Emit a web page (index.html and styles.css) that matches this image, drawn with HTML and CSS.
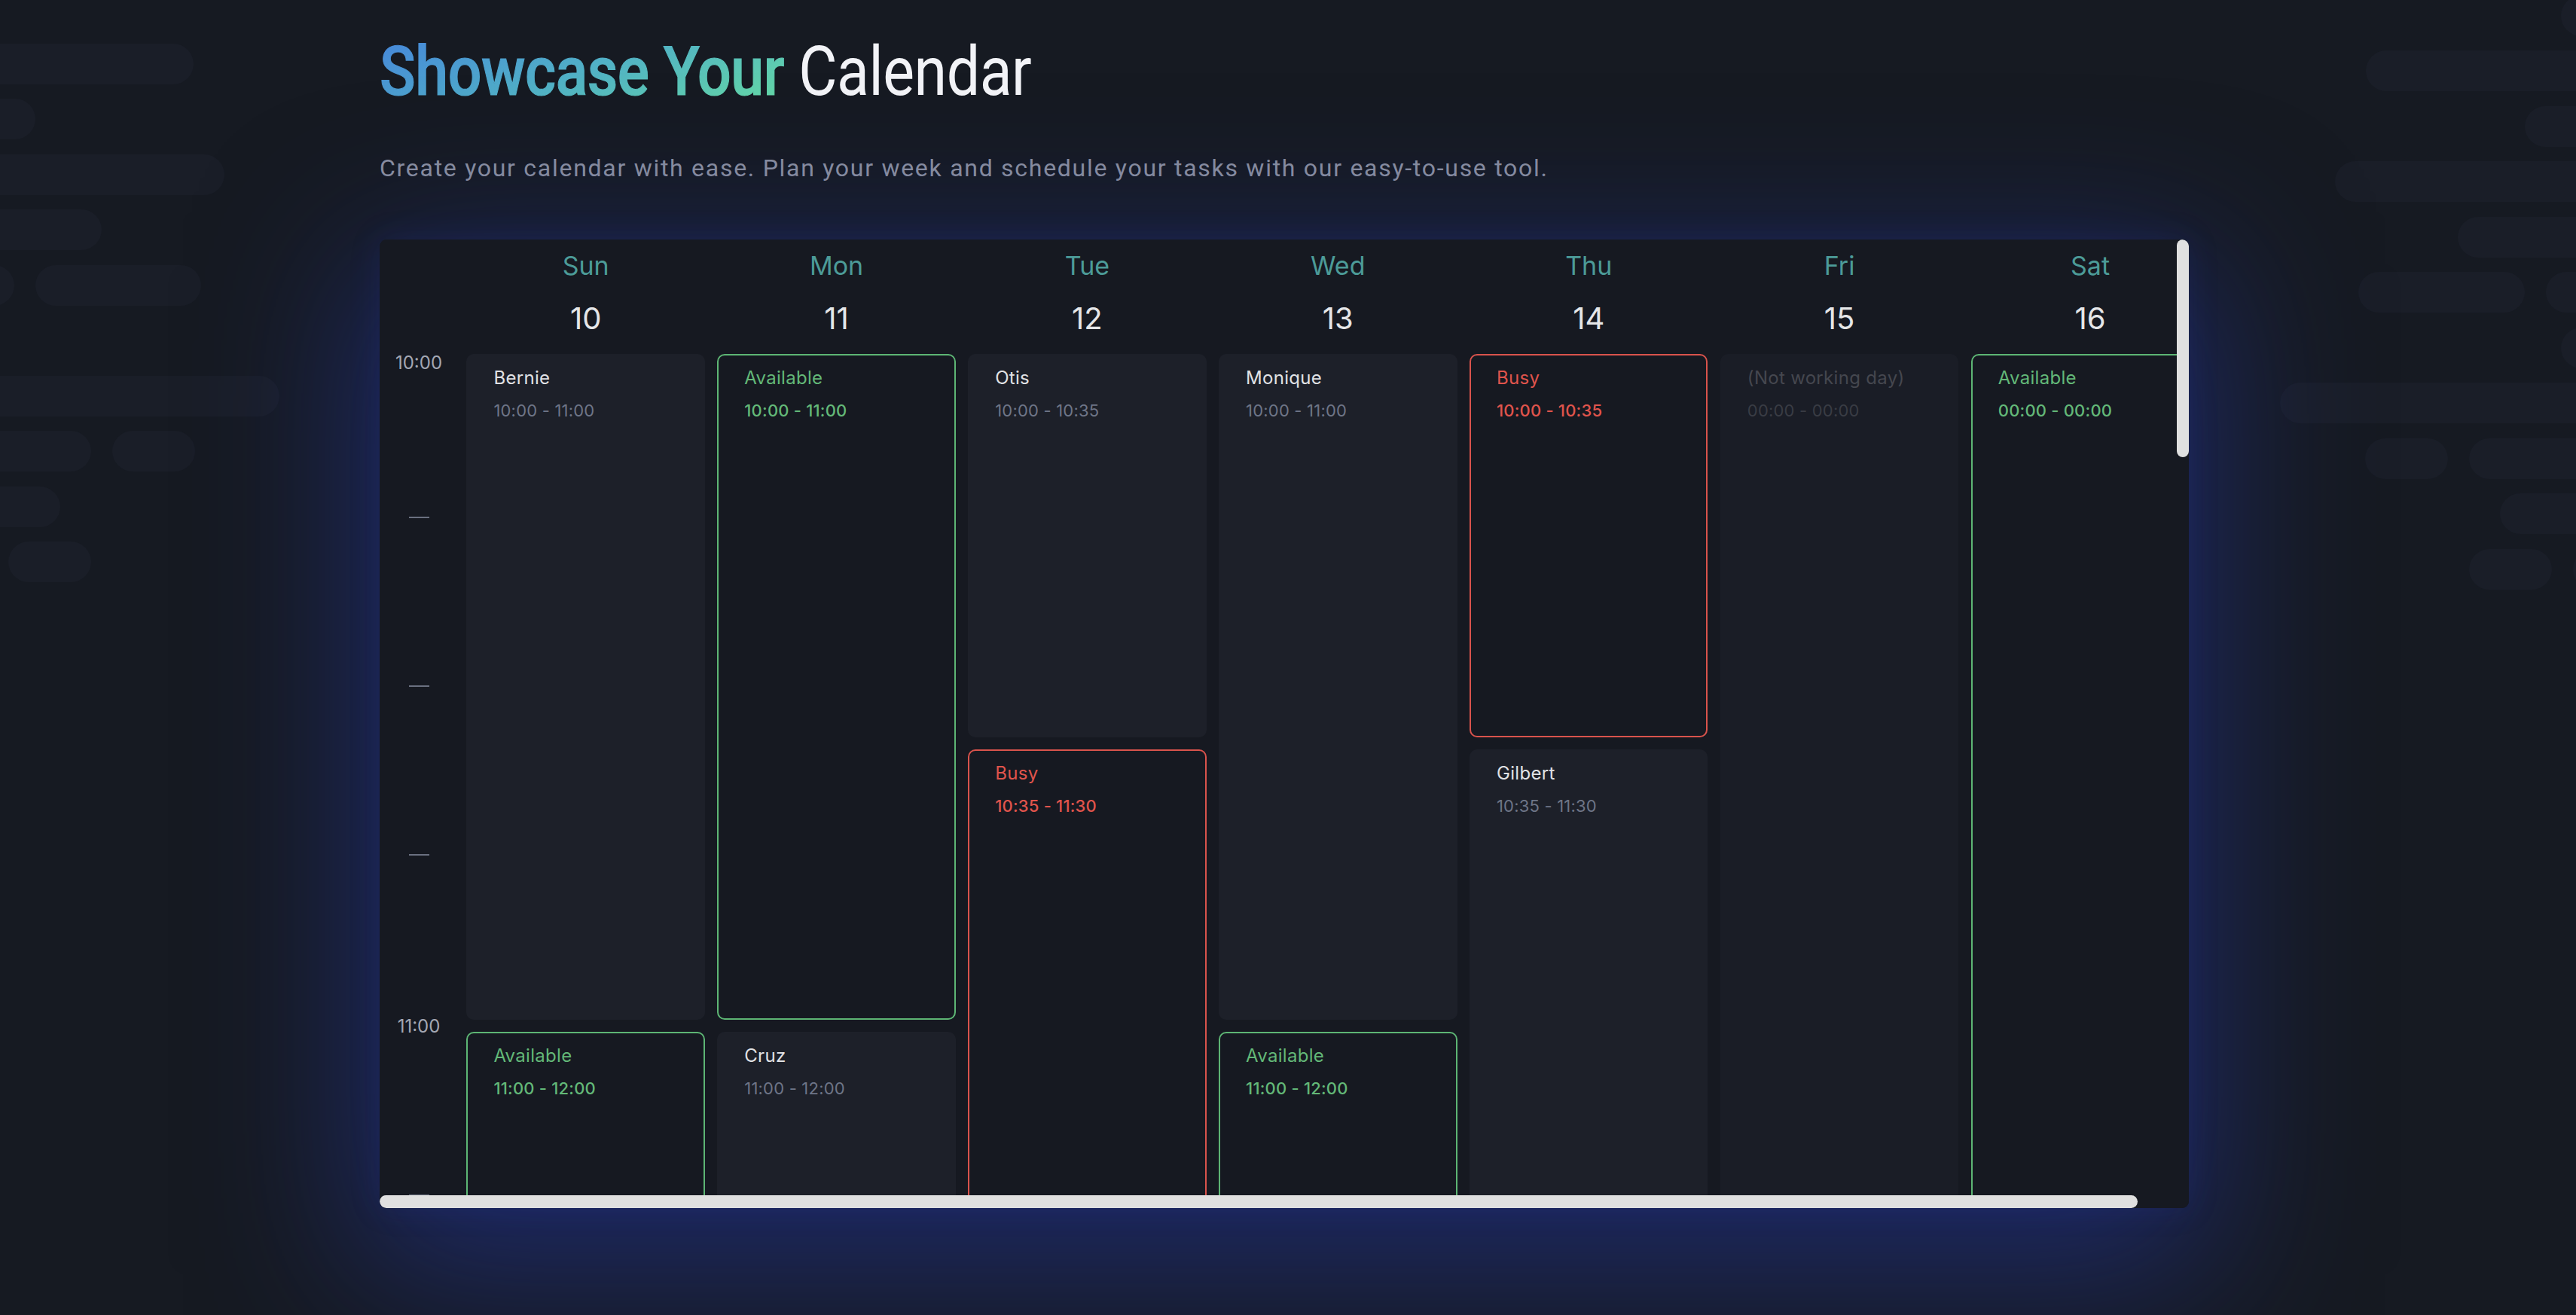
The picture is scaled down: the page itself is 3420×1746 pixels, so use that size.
FILE: index.html
```html
<!DOCTYPE html>
<html lang="en">
<head>
<meta charset="utf-8">
<title>Showcase Your Calendar</title>
<link rel="stylesheet" href="styles.css">
</head>
<body>
<div class="deco deco-left">
  <div class="row"><span class="pill edge-l w257"></span></div>
  <div class="row"><span class="pill edge-l w47"></span></div>
  <div class="row"><span class="pill edge-l w298"></span></div>
  <div class="row"><span class="pill edge-l w135"></span></div>
  <div class="row"><span class="pill edge-l w19"></span><span class="pill w220"></span></div>
  <div class="row"></div>
  <div class="row"><span class="pill edge-l w371"></span></div>
  <div class="row"><span class="pill edge-l w121"></span><span class="pill w110"></span></div>
  <div class="row"><span class="pill edge-l w80"></span></div>
  <div class="row"><span class="pill off11 w110"></span></div>
</div>
<div class="deco deco-right">
  <div class="row"><span class="pill edge-r w20"></span></div>
  <div class="row"><span class="pill edge-r w279"></span></div>
  <div class="row"><span class="pill edge-r w68"></span></div>
  <div class="row"><span class="pill edge-r w320"></span></div>
  <div class="row"><span class="pill edge-r w157"></span></div>
  <div class="row"><span class="pill w221"></span><span class="pill edge-r w40"></span></div>
  <div class="row"><span class="pill edge-r w20"></span></div>
  <div class="row"><span class="pill edge-r w393"></span></div>
  <div class="row"><span class="pill w110"></span><span class="pill edge-r w142"></span></div>
  <div class="row"><span class="pill edge-r w101"></span></div>
  <div class="row"><span class="pill w110"></span><span class="pill edge-r w4"></span></div>
</div>

<main class="page">
  <h1 class="title"><span class="grad">Showcase Your</span> Calendar</h1>
  <p class="subtitle">Create your calendar with ease. Plan your week and schedule your tasks with our easy-to-use tool.</p>

  <section class="cal">
    <div class="cal-inner">
      <div class="cal-head">
        <div class="corner"></div>
        <div class="day"><div class="dname">Sun</div><div class="dnum">10</div></div>
        <div class="day"><div class="dname">Mon</div><div class="dnum">11</div></div>
        <div class="day"><div class="dname">Tue</div><div class="dnum">12</div></div>
        <div class="day"><div class="dname">Wed</div><div class="dnum">13</div></div>
        <div class="day"><div class="dname">Thu</div><div class="dnum">14</div></div>
        <div class="day"><div class="dname">Fri</div><div class="dnum">15</div></div>
        <div class="day"><div class="dname">Sat</div><div class="dnum">16</div></div>
      </div>
      <div class="cal-body">
        <div class="times">
          <div class="tl t-first">10:00</div>
          <div class="tl t-q"><span class="dash"></span></div>
          <div class="tl t-q"><span class="dash"></span></div>
          <div class="tl t-last"><span class="dash"></span></div>
          <div class="tl t-q">11:00</div>
          <div class="tl t-q"><span class="dash"></span></div>
        </div>
        <div class="col">
          <div class="ev ev-person" style="height:884px"><div class="ev-title">Bernie</div><div class="ev-time">10:00 - 11:00</div></div>
          <div class="ev ev-avail" style="height:884px"><div class="ev-title">Available</div><div class="ev-time">11:00 - 12:00</div></div>
        </div>
        <div class="col">
          <div class="ev ev-avail" style="height:884px"><div class="ev-title">Available</div><div class="ev-time">10:00 - 11:00</div></div>
          <div class="ev ev-person" style="height:884px"><div class="ev-title">Cruz</div><div class="ev-time">11:00 - 12:00</div></div>
        </div>
        <div class="col">
          <div class="ev ev-person" style="height:509px"><div class="ev-title">Otis</div><div class="ev-time">10:00 - 10:35</div></div>
          <div class="ev ev-busy" style="height:809px"><div class="ev-title">Busy</div><div class="ev-time">10:35 - 11:30</div></div>
        </div>
        <div class="col">
          <div class="ev ev-person" style="height:884px"><div class="ev-title">Monique</div><div class="ev-time">10:00 - 11:00</div></div>
          <div class="ev ev-avail" style="height:884px"><div class="ev-title">Available</div><div class="ev-time">11:00 - 12:00</div></div>
        </div>
        <div class="col">
          <div class="ev ev-busy" style="height:509px"><div class="ev-title">Busy</div><div class="ev-time">10:00 - 10:35</div></div>
          <div class="ev ev-person" style="height:809px"><div class="ev-title">Gilbert</div><div class="ev-time">10:35 - 11:30</div></div>
        </div>
        <div class="col">
          <div class="ev ev-off" style="height:2000px"><div class="ev-title">(Not working day)</div><div class="ev-time">00:00 - 00:00</div></div>
        </div>
        <div class="col">
          <div class="ev ev-avail" style="height:2000px"><div class="ev-title">Available</div><div class="ev-time">00:00 - 00:00</div></div>
        </div>
      </div>
    </div>
    <div class="sb-v"></div>
    <div class="sb-h"></div>
  </section>
</main>
</body>
</html>
```

FILE: styles.css
```css
* { box-sizing: border-box; }

html, body {
  margin: 0;
  padding: 0;
  height: 1746px;
  overflow: hidden;
  background: #161a22;
}

body {
  position: relative;
  font-family: "Roboto", "Liberation Sans", sans-serif;
}

/* decorative skeleton pills */
.deco {
  position: absolute;
  display: flex;
  flex-direction: column;
  gap: 19.5px;
  z-index: 0;
}
.deco-left { top: 57.6px; left: 0; align-items: flex-start; }
.deco-right { top: -6.5px; right: 0; align-items: flex-end; }
.deco .row {
  height: 54px;
  display: flex;
  gap: 28px;
}
.deco-right .row { justify-content: flex-end; }
.pill {
  display: block;
  height: 54px;
  border-radius: 27px;
  background: #1a1e28;
}
.edge-l { margin-left: -60px; }
.edge-r { margin-right: -60px; }
.off11 { margin-left: 11px; }
.edge-l.w257 { width: 317px; }
.edge-l.w47 { width: 107px; }
.edge-l.w298 { width: 358px; }
.edge-l.w135 { width: 195px; }
.edge-l.w19 { width: 79px; }
.edge-l.w371 { width: 431px; }
.edge-l.w121 { width: 181px; }
.edge-l.w80 { width: 140px; }
.w220 { width: 220px; }
.w110 { width: 110px; }
.w221 { width: 221px; }
.edge-r.w20 { width: 80px; }
.edge-r.w279 { width: 339px; }
.edge-r.w68 { width: 128px; }
.edge-r.w320 { width: 380px; }
.edge-r.w157 { width: 217px; }
.edge-r.w40 { width: 100px; }
.edge-r.w393 { width: 453px; }
.edge-r.w142 { width: 202px; }
.edge-r.w101 { width: 161px; }
.edge-r.w4 { width: 64px; }

/* page */
.page {
  position: relative;
  z-index: 1;
  padding: 42px 0 0 504px;
}

.title {
  margin: 0;
  font-family: "Roboto", sans-serif;
  font-size: 91px;
  line-height: 107px;
  font-weight: 400;
  color: #f2f3f7;
  letter-spacing: -0.5px;
  white-space: nowrap;
  width: max-content;
  transform: scaleX(0.866);
  transform-origin: left center;
}
.grad {
  font-weight: 500;
  -webkit-text-stroke: 1.2px transparent;
  background: linear-gradient(160deg, #4584dc 0%, #51b1c6 50%, #66dca3 100%);
  -webkit-background-clip: text;
  background-clip: text;
  color: transparent;
}

.subtitle {
  margin: 56px 0 0;
  font-family: "Roboto", sans-serif;
  font-size: 32px;
  line-height: 37.5px;
  letter-spacing: 1.72px;
  color: #8b90a0;
  white-space: nowrap;
}

/* calendar card */
.cal {
  position: relative;
  margin-top: 75px;
  width: 2402px;
  height: 1286px;
  border-radius: 9px;
  background: #161921;
  overflow: hidden;
  box-shadow: 0 0 40px 0 rgba(38, 58, 170, 0.18), 0 60px 210px 30px rgba(38, 58, 170, 0.5);
  font-family: "Inter", "Roboto", sans-serif;
}

.cal-head,
.cal-body {
  display: grid;
  grid-template-columns: 99px repeat(7, 316.5px);
  column-gap: 16.4px;
}

.cal-head {
  padding-top: 14px;
}
.day {
  text-align: center;
}
.dname {
  font-size: 34px;
  line-height: 41px;
  color: #4c9b98;
}
.dnum {
  margin-top: 26px;
  font-size: 40px;
  line-height: 48px;
  color: #e5e6e8;
}

.cal-body {
  margin-top: 23px;
  align-items: start;
}

.times {
  margin-top: -3px;
  padding-left: 5px;
  text-align: center;
  font-size: 24px;
  line-height: 29px;
  color: #a3a7b3;
}
.tl { display: flow-root; }
.t-first { height: 205.5px; }
.t-q { height: 224px; }
.t-last { height: 228px; }
.dash {
  display: block;
  width: 27px;
  height: 2px;
  margin: 13.5px auto 0;
  background: #6a7080;
}

.col {
  display: flex;
  flex-direction: column;
  gap: 16px;
}

.ev {
  flex: none;
  border-radius: 10px;
  padding: 18.5px 20px 0 36px;
}
.ev-title {
  font-size: 24px;
  line-height: 28px;
  letter-spacing: 0.3px;
  white-space: nowrap;
}
.ev-time {
  margin-top: 15.5px;
  font-size: 22px;
  line-height: 27px;
  letter-spacing: 0.2px;
  white-space: nowrap;
}

.ev-person { background: #1d2029; }
.ev-person .ev-title { color: #e1e2e5; }
.ev-person .ev-time { color: #6e7587; }

.ev-avail {
  border: 2px solid #5db574;
  padding-left: 34px;
  padding-top: 16.5px;
  background: #161921;
}
.ev-avail .ev-title { color: #63b878; }
.ev-avail .ev-time { color: #63b878; font-weight: 500; }

.ev-busy {
  border: 2px solid #d9534c;
  padding-left: 34px;
  padding-top: 16.5px;
  background: #161921;
}
.ev-busy .ev-title { color: #e0544c; }
.ev-busy .ev-time { color: #e0544c; font-weight: 500; }

.ev-off { background: #1a1d26; }
.ev-off .ev-title { color: #45474f; }
.ev-off .ev-time { color: #393c44; }

/* scrollbars (overlay) */
.sb-v {
  position: absolute;
  top: 0;
  right: 0;
  width: 16px;
  height: 289px;
  border-radius: 8px;
  background: #e0e0e0;
}
.sb-h {
  position: absolute;
  left: 0;
  bottom: 0;
  width: 2334px;
  height: 17px;
  border-radius: 8.5px;
  background: #e0e0e0;
}
```
